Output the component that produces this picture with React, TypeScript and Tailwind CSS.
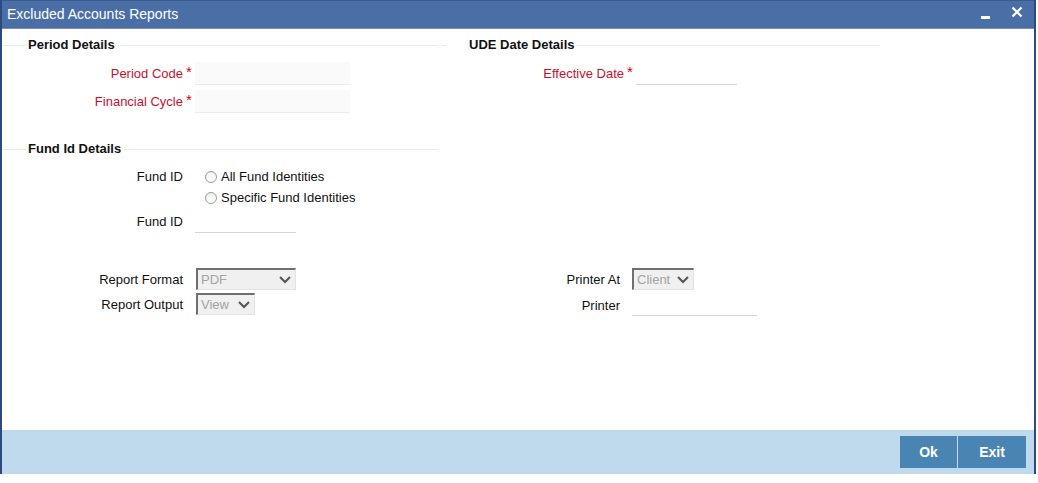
import { ReactNode } from "react";

function SectionHead({ title, lead }: { title: string; lead: ReactNode }) {
  return (
    <div className="flex items-center h-[18px]">
      {lead}
      <span className="text-[13px] font-bold text-[#111] whitespace-nowrap pr-[3px]">{title}</span>
      <div className="flex-1 border-t border-[#e9e9e9]" />
    </div>
  );
}

function Chevron() {
  return (
    <svg width="12" height="8" viewBox="0 0 12 8" className="shrink-0">
      <polyline points="1,1 6,6 11,1" fill="none" stroke="#555" strokeWidth="2" />
    </svg>
  );
}

function Select({ value, w }: { value: string; w: string }) {
  return (
    <div
      className={`${w} h-[22px] flex items-center justify-between pl-[3px] pr-[4px] bg-[#f0f0f0] border-t-2 border-l-2 border-r border-b border-t-[#6f6f6f] border-l-[#6f6f6f] border-r-[#e2e2e2] border-b-[#e2e2e2]`}
    >
      <span className="text-[13px] text-[#a3a3a3]">{value}</span>
      <Chevron />
    </div>
  );
}

function Radio({ label }: { label: string }) {
  return (
    <div className="flex items-center h-[20px] ml-[10px]">
      <span className="w-[12px] h-[12px] rounded-full border border-[#9a9a9a] bg-gradient-to-b from-[#f2f2f2] to-white" />
      <span className="ml-[4px] text-[13px] text-[#111]">{label}</span>
    </div>
  );
}

function Req() {
  return <span className="w-[12px] pl-[3px] text-[15px] text-[#e00000] leading-none self-start mt-[2px]">*</span>;
}

export default function App() {
  return (
    <div className="w-[1038px] h-[483px] bg-white font-['Liberation_Sans',Arial,sans-serif]">
      <div className="w-[1036px] h-[474px] flex flex-col border-l-2 border-r-2 border-[#2c4a7d]">
        {/* title bar */}
        <div className="h-[29px] shrink-0 flex items-center justify-between bg-[#4a6fa6] border-t border-[#3a5b90] border-b border-b-[#7d8ea3]">
          <span className="pl-[5px] text-[14px] text-white">Excluded Accounts Reports</span>
          <div className="flex items-center pr-[11px] gap-[21px]">
            <span className="w-[9px] h-[3px] bg-white mt-[6px]" />
            <svg width="12" height="12" viewBox="0 0 12 12" className="-mt-[6px]">
              <path d="M1.5 1.5 L10.5 10.5 M10.5 1.5 L1.5 10.5" stroke="white" strokeWidth="2.2" />
            </svg>
          </div>
        </div>

        {/* body */}
        <div className="flex-1 flex flex-col">
          <div className="flex mt-[7px]">
            {/* Period Details */}
            <div className="w-[436px]">
              <SectionHead
                title="Period Details"
                lead={<div className="ml-[1px] w-[23px] border-t border-[#e9e9e9] mr-[2px]" />}
              />
              <div className="flex h-[23px] mt-[8px]">
                <span className="w-[181px] text-right text-[13px] text-[#c8102e] leading-[23px]">Period Code</span>
                <Req />
                <div className="w-[155px] bg-[#fafafa] border-b border-[#ececec]" />
              </div>
              <div className="flex h-[23px] mt-[5px]">
                <span className="w-[181px] text-right text-[13px] text-[#c8102e] leading-[23px]">Financial Cycle</span>
                <Req />
                <div className="w-[155px] bg-[#fafafa] border-b border-[#ececec]" />
              </div>
            </div>
            {/* UDE Date Details */}
            <div className="w-[438px] ml-[4px]">
              <SectionHead
                title="UDE Date Details"
                lead={<div className="w-[5px] border-t border-[#e9e9e9] mr-[22px]" />}
              />
              <div className="flex h-[23px] mt-[8px]">
                <span className="w-[182px] text-right text-[13px] text-[#c8102e] leading-[23px]">Effective Date</span>
                <Req />
                <div className="w-[101px] border-b border-[#d4d4d4]" />
              </div>
            </div>
          </div>

          {/* Fund Id Details */}
          <div className="w-[436px] mt-[27px]">
            <SectionHead
              title="Fund Id Details"
              lead={<div className="ml-[1px] w-[23px] border-t border-[#e9e9e9] mr-[2px]" />}
            />
            <div className="flex mt-[9px]">
              <span className="w-[181px] text-right text-[13px] text-[#111] leading-[20px]">Fund ID</span>
              <span className="w-[12px]" />
              <div className="flex flex-col gap-[1px]">
                <Radio label="All Fund Identities" />
                <Radio label="Specific Fund Identities" />
              </div>
            </div>
            <div className="flex h-[23px] mt-[2px]">
              <span className="w-[181px] text-right text-[13px] text-[#111] leading-[23px]">Fund ID</span>
              <span className="w-[12px]" />
              <div className="w-[101px] border-b border-[#d4d4d4]" />
            </div>
          </div>

          {/* Report options */}
          <div className="flex mt-[35px]">
            <div className="w-[436px] flex flex-col gap-[3px]">
              <div className="flex h-[22px] items-center">
                <span className="w-[181px] text-right text-[13px] text-[#111] translate-y-[1px]">Report Format</span>
                <span className="w-[13px]" />
                <Select value="PDF" w="w-[100px]" />
              </div>
              <div className="flex h-[22px] items-center">
                <span className="w-[181px] text-right text-[13px] text-[#111] translate-y-[1px]">Report Output</span>
                <span className="w-[13px]" />
                <Select value="View" w="w-[59px]" />
              </div>
            </div>
            <div className="flex flex-col gap-[3px]">
              <div className="flex h-[22px] items-center">
                <span className="w-[182px] text-right text-[13px] text-[#111] translate-y-[1px]">Printer At</span>
                <span className="w-[12px]" />
                <Select value="Client" w="w-[62px]" />
              </div>
              <div className="flex h-[23px] items-center">
                <span className="w-[182px] text-right text-[13px] text-[#111] translate-y-[1px]">Printer</span>
                <span className="w-[12px]" />
                <div className="w-[125px] h-full border-b border-[#d4d4d4]" />
              </div>
            </div>
          </div>
        </div>

        {/* footer */}
        <div className="h-[44px] shrink-0 bg-[#bfd9ed] flex items-center justify-end pr-[8px]">
          <div className="flex gap-[1px]">
            <button className="w-[57px] h-[32px] bg-[#4a84b3] text-white text-[14px] font-bold">Ok</button>
            <button className="w-[68px] h-[32px] bg-[#4a84b3] text-white text-[14px] font-bold">Exit</button>
          </div>
        </div>
      </div>
    </div>
  );
}
